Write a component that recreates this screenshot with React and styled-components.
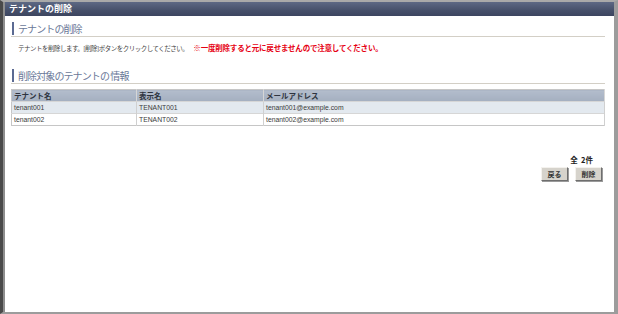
import React from 'react';
import styled, { createGlobalStyle } from 'styled-components';

const GlobalStyle = createGlobalStyle`
  html, body {
    margin: 0;
    padding: 0;
    background: #ffffff;
  }
  body {
    font-family: "Liberation Sans", "Noto Sans CJK JP", sans-serif;
    color: #333333;
  }
`;

const Frame = styled.div`
  width: 618px;
  height: 314px;
  box-sizing: border-box;
  border-top: 2px solid #a9a9a9;
  border-left: 3px solid #4a4a4a;
  border-right: 4px solid #9c9c9c;
  border-bottom: 2px solid #9c9c9c;
  display: flex;
  flex-direction: column;
  overflow: hidden;
`;

const Inner = styled.div`
  flex: 1;
  border-left: 2px solid #8e8e8e;
  display: flex;
  flex-direction: column;
  background: #ffffff;
`;

const TitleBar = styled.div`
  height: 14px;
  background: linear-gradient(#5d6884, #46506a 60%, #3c4560);
  color: #ffffff;
  font-family: "Noto Sans CJK JP", sans-serif;
  font-weight: bold;
  font-size: 9px;
  line-height: 14px;
  padding-left: 4px;
`;

const Content = styled.div`
  padding: 6px 9px 0 6px;
  display: flex;
  flex-direction: column;
`;

const SectionHeader = styled.div`
  border-bottom: 1px solid #d3cfc6;
  padding: 0 0 1px 0;
  margin-top: ${(p) => p.$top || 0}px;
`;

const SectionTitle = styled.div`
  border-left: 2px solid #5b6a92;
  padding-left: 4px;
  height: 13px;
  line-height: 13px;
  font-family: "Noto Sans CJK JP", sans-serif;
  font-size: 10px;
  letter-spacing: -0.9px;
  color: #6a7898;
  margin-left: 1px;
  white-space: pre;
`;

const Description = styled.p`
  margin: 6px 0 0 7px;
  font-family: "Noto Sans CJK JP", sans-serif;
  font-size: 6.5px;
  letter-spacing: -0.5px;
  line-height: 10px;
  color: #444444;
  white-space: nowrap;
`;

const Warning = styled.span`
  color: #e60012;
  font-weight: bold;
  font-size: 7.5px;
  letter-spacing: -0.2px;
  margin-left: 5px;
`;

const Table = styled.table`
  margin-top: 5px;
  width: 594px;
  border-collapse: collapse;
  table-layout: fixed;
  border: 1px solid #c6c6c6;
`;

const HeadCell = styled.th`
  background: linear-gradient(#b3bdcc, #a4afc0);
  border-right: 1px solid #d6d6d6;
  height: 11px;
  padding: 0 2px;
  text-align: left;
  font-family: "Noto Sans CJK JP", sans-serif;
  font-size: 7.5px;
  font-weight: bold;
  color: #2e3440;
  line-height: 11px;
  width: ${(p) => (p.$w ? `${p.$w}px` : 'auto')};
`;

const Row = styled.tr`
  background: ${(p) => (p.$alt ? '#e3e9ef' : '#ffffff')};
`;

const Cell = styled.td`
  border-right: 1px solid #d0d0d0;
  border-top: 1px solid #d6d6d6;
  height: 11px;
  padding: 0 2px;
  font-size: 6.8px;
  line-height: 11px;
  color: #3a3a3a;
`;

const Footer = styled.div`
  margin-top: 29px;
  display: flex;
  flex-direction: column;
  align-items: flex-end;
`;

const Count = styled.div`
  font-family: "Noto Sans CJK JP", sans-serif;
  font-weight: bold;
  font-size: 7.5px;
  line-height: 10px;
  color: #222222;
  margin-right: 12px;
  white-space: pre;
`;

const Buttons = styled.div`
  display: flex;
  gap: 7px;
  margin-top: 2px;
  margin-right: 3px;
`;

const Button = styled.button`
  width: 27px;
  height: 14px;
  padding: 0;
  background: #d6d3cc;
  border: 1px solid;
  border-color: #f4f2ee #6e6e6e #6e6e6e #f4f2ee;
  box-shadow: 1px 1px 0 #9a9a9a;
  font-family: "Noto Sans CJK JP", sans-serif;
  font-weight: bold;
  font-size: 7px;
  line-height: 12px;
  color: #333333;
`;

const tenants = [
  { id: 'tenant001', name: 'TENANT001', mail: 'tenant001@example.com' },
  { id: 'tenant002', name: 'TENANT002', mail: 'tenant002@example.com' },
];

export default function App() {
  return (
    <>
      <GlobalStyle />
      <Frame>
        <Inner>
          <TitleBar>テナントの削除</TitleBar>
          <Content>
            <SectionHeader>
              <SectionTitle>テナントの削除</SectionTitle>
            </SectionHeader>
            <Description>
              テナントを削除します。[削除]ボタンをクリックしてください。
              <Warning>※一度削除すると元に戻せませんので注意してください。</Warning>
            </Description>
            <SectionHeader $top={16}>
              <SectionTitle>削除対象のテナントの 情報</SectionTitle>
            </SectionHeader>
            <Table>
              <thead>
                <tr>
                  <HeadCell $w={120}>テナント名</HeadCell>
                  <HeadCell $w={122}>表示名</HeadCell>
                  <HeadCell>メールアドレス</HeadCell>
                </tr>
              </thead>
              <tbody>
                {tenants.map((t, i) => (
                  <Row key={t.id} $alt={i % 2 === 0}>
                    <Cell>{t.id}</Cell>
                    <Cell>{t.name}</Cell>
                    <Cell>{t.mail}</Cell>
                  </Row>
                ))}
              </tbody>
            </Table>
            <Footer>
              <Count>全  2件</Count>
              <Buttons>
                <Button>戻る</Button>
                <Button>削除</Button>
              </Buttons>
            </Footer>
          </Content>
        </Inner>
      </Frame>
    </>
  );
}
